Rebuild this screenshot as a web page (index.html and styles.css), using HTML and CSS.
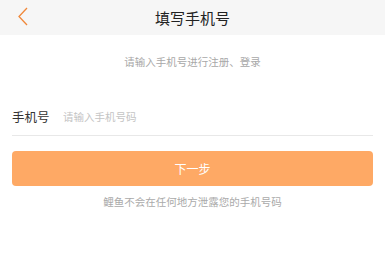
FILE: index.html
```html
<!DOCTYPE html>
<html lang="zh-CN">
<head>
    <meta charset="UTF-8">
    <meta name="viewport" content="width=device-width, initial-scale=1.0">
    <title>填写手机号</title>
    <link rel="stylesheet" href="styles.css">
</head>
<body>
    <div class="header">
        <a class="back" href="#">
            <svg width="12" height="20" viewBox="0 0 12 20">
                <polyline points="10,1 2,9.5 10,18" fill="none" stroke="#f0883a" stroke-width="1.3"/>
            </svg>
        </a>
        <h1>填写手机号</h1>
    </div>

    <div class="content">
        <p class="tip">请输入手机号进行注册、登录</p>

        <div class="phone-row">
            <label for="phone">手机号</label>
            <input id="phone" type="tel" placeholder="请输入手机号码">
        </div>

        <button class="next-btn">下一步</button>

        <p class="note">鲤鱼不会在任何地方泄露您的手机号码</p>
    </div>
</body>
</html>
```

FILE: styles.css
```css
body {
    margin: 0;
    background-color: #fff;
    font-family: "Noto Sans CJK SC", "Noto Sans", sans-serif;
}
.header {
    height: 35px;
    background-color: #f6f6f6;
    display: flex;
    align-items: center;
    justify-content: center;
    position: relative;
}
.back {
    position: absolute;
    left: 17px;
    top: 7px;
    display: flex;
}
.header h1 {
    margin: 0;
    font-size: 15px;
    font-weight: normal;
    color: #222;
}
.content {
    padding: 0 12px;
}
.tip {
    margin: 0;
    padding-top: 20px;
    text-align: center;
    font-size: 10.5px;
    color: #a8a8a8;
    line-height: 14px;
}
.phone-row {
    display: flex;
    align-items: center;
    height: 38px;
    margin-top: 28px;
    border-bottom: 1px solid #e8e8e8;
}
.phone-row label {
    width: 51px;
    font-size: 12.5px;
    color: #333;
}
.phone-row input {
    flex: 1;
    border: none;
    outline: none;
    padding: 0;
    font-family: inherit;
    font-size: 10.5px;
    color: #333;
}
.phone-row input::placeholder {
    color: #c4c4c4;
}
.next-btn {
    display: block;
    width: 100%;
    height: 35px;
    margin-top: 15px;
    border: none;
    border-radius: 4px;
    background-color: #fea965;
    color: #fff;
    font-family: inherit;
    font-size: 12px;
}
.note {
    margin: 9px 0 0;
    text-align: center;
    font-size: 10.5px;
    color: #aaa;
    line-height: 14px;
}
```
